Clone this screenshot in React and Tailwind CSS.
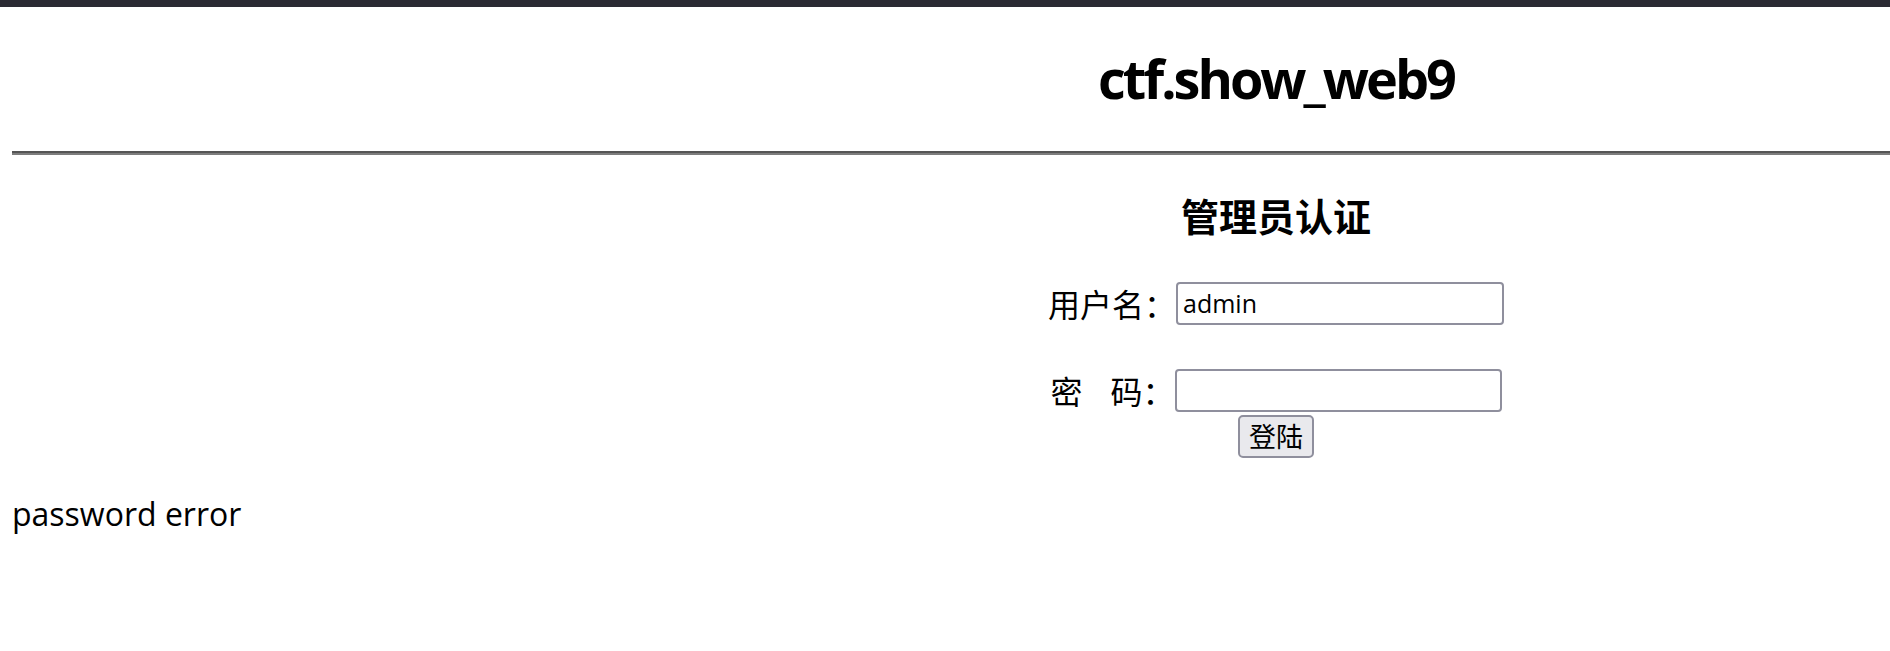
export default function App() {
  const cjk = { fontFamily: '"Noto Sans CJK SC", "Microsoft YaHei", sans-serif' };
  return (
    <div className="w-screen h-[651px] overflow-hidden bg-white text-black">
      <div className="h-[7px] bg-[#2b2a33]" />
      <div className="w-[2528px] ml-[12px] font-['Open_Sans',sans-serif]">
        <h2 className="mt-[41px] h-[60px] leading-[60px] text-center text-[54px] font-bold tracking-[-3px]">
          ctf.show_web9
        </h2>
        <div className="mt-[43px] h-[4px] border-t-2 border-b-2 border-t-[#555555] border-b-[#7d7d7d]" />
        <h3
          className="mt-[37px] h-[46px] leading-[46px] text-center text-[38px] font-bold"
          style={cjk}
        >
          管理员认证
        </h3>
        <div className="flex flex-col items-center">
          <div className="mt-[44px] flex items-center h-[43px]">
            <span className="text-[32px] leading-[43px]" style={cjk}>用户名：</span>
            <div className="w-[328px] h-[43px] border-2 border-[#8f8f9d] rounded-[4px] pl-[5px] flex items-center text-[25px] font-['Open_Sans',sans-serif]">
              admin
            </div>
          </div>
          <div className="mt-[44px] flex items-center h-[43px]">
            <span className="text-[32px] leading-[43px] flex items-center" style={cjk}>
              <span>密</span>
              <span className="inline-block w-[28px]" />
              <span>码：</span>
            </span>
            <div className="w-[327px] h-[43px] border-2 border-[#8f8f9d] rounded-[4px]" />
          </div>
          <div
            className="mt-[3px] w-[76px] h-[43px] border-2 border-[#8f8f9d] rounded-[5px] bg-[#e9e9ed] flex items-center justify-center text-[27px]"
            style={cjk}
          >
            登陆
          </div>
        </div>
        <p className="mt-[36px] h-[40px] leading-[40px] text-[32px]">password error</p>
      </div>
    </div>
  );
}
